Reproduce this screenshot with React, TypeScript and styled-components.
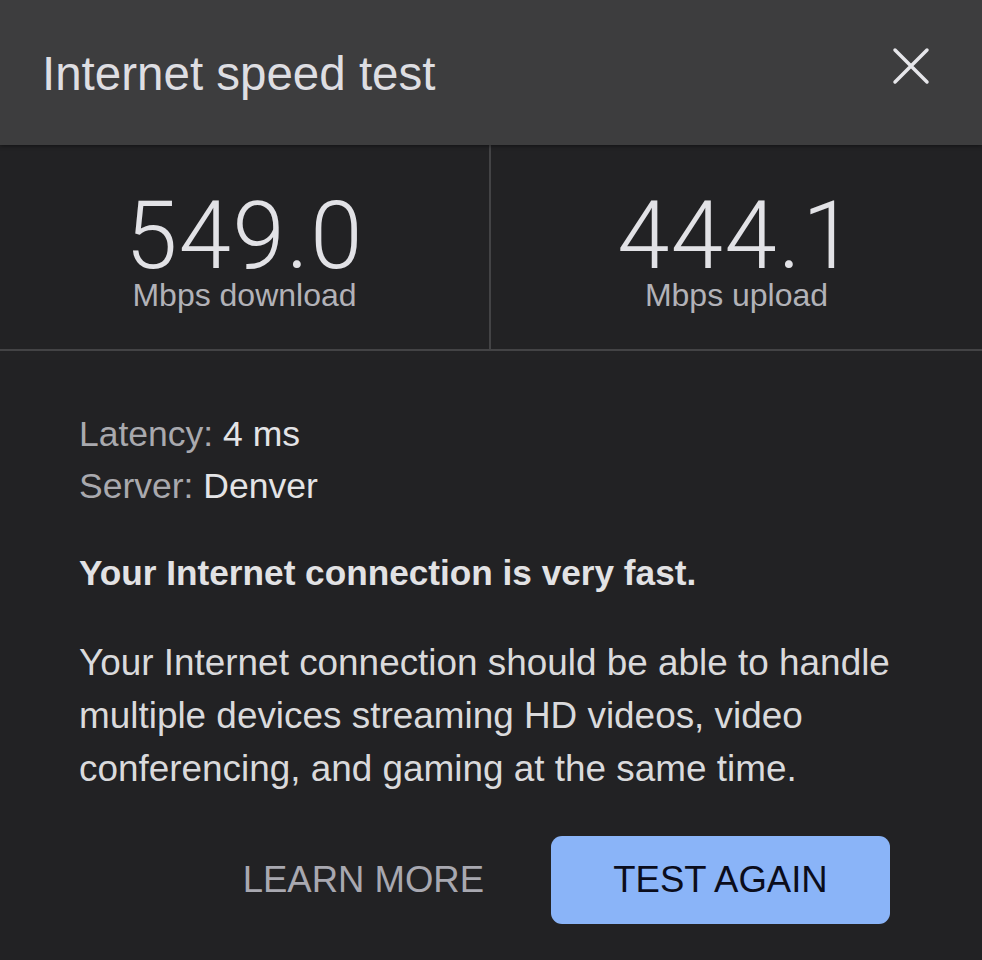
import React from "react";
import styled, { createGlobalStyle } from "styled-components";

const Global = createGlobalStyle`
  html, body { margin: 0; padding: 0; background: #222224; }
  body { font-family: "Liberation Sans", Arial, sans-serif; }
`;

const Card = styled.div`
  width: 982px;
  height: 960px;
  background: #222224;
  display: flex;
  flex-direction: column;
  overflow: hidden;
`;

const Header = styled.header`
  position: relative;
  z-index: 1;
  height: 145px;
  flex-shrink: 0;
  background: #3d3d3e;
  display: flex;
  align-items: flex-start;
  justify-content: space-between;
  padding: 46px 52px 0 42px;
  box-sizing: border-box;
  box-shadow: 0 1px 4px rgba(0, 0, 0, 0.45);
`;

const Title = styled.h1`
  margin: 0;
  font-size: 47.5px;
  line-height: 56px;
  font-weight: 400;
  color: #dedee2;
`;

const Close = styled.button`
  background: none;
  border: none;
  padding: 0;
  margin-top: 1px;
  width: 38px;
  height: 38px;
  display: flex;
  align-items: center;
  justify-content: center;
  cursor: pointer;
`;

const Stats = styled.div`
  display: grid;
  grid-template-columns: 491px 1fr;
  height: 204px;
  flex-shrink: 0;
  border-bottom: 2px solid #434345;
`;

const Stat = styled.div<{ $divider?: boolean }>`
  display: flex;
  flex-direction: column;
  align-items: center;
  padding-top: 51px;
  box-sizing: border-box;
  border-right: ${(p) => (p.$divider ? "2px solid #434345" : "none")};
`;

const Value = styled.div`
  font-family: Roboto, "Liberation Sans", sans-serif;
  font-size: 94px;
  font-weight: 300;
  line-height: 80px;
  letter-spacing: 1.5px;
  color: #e2e2e6;
`;

const Unit = styled.div`
  font-size: 32px;
  line-height: 32px;
  color: #b2b2b8;
  margin-top: 3px;
`;

const Body = styled.div`
  padding: 57px 50px 0 79px;
  display: flex;
  flex-direction: column;
`;

const InfoLine = styled.div`
  font-size: 35.5px;
  line-height: 52px;
  color: #a9a9ae;
`;

const Strong = styled.span`
  color: #e4e4e6;
`;

const Headline = styled.p`
  margin: 35px 0 0 0;
  font-size: 35.2px;
  line-height: 52px;
  font-weight: 700;
  color: #e2e2e4;
`;

const Paragraph = styled.p`
  margin: 37px 0 0 0;
  font-size: 36.9px;
  line-height: 53px;
  color: #dadadc;
`;

const Actions = styled.div`
  display: flex;
  justify-content: flex-end;
  align-items: center;
  gap: 67px;
  margin-top: 41px;
  padding-right: 42px;
`;

const TextButton = styled.button`
  background: none;
  border: none;
  font-family: inherit;
  font-size: 36.5px;
  color: #a8a8b0;
  padding: 0;
  cursor: pointer;
`;

const FilledButton = styled.button`
  width: 339px;
  height: 88px;
  background: #8ab4f8;
  border: none;
  border-radius: 11px;
  font-family: inherit;
  font-size: 36.5px;
  color: #0b0d1c;
  cursor: pointer;
`;

export default function App() {
  return (
    <>
      <Global />
      <Card>
        <Header>
          <Title>Internet speed test</Title>
          <Close aria-label="Close">
            <svg width="38" height="38" viewBox="0 0 38 38">
              <path d="M3 3 L35 35 M35 3 L3 35" stroke="#e6e6ea" strokeWidth="3.5" strokeLinecap="round" />
            </svg>
          </Close>
        </Header>
        <Stats>
          <Stat $divider>
            <Value>549.0</Value>
            <Unit>Mbps download</Unit>
          </Stat>
          <Stat>
            <Value>444.1</Value>
            <Unit>Mbps upload</Unit>
          </Stat>
        </Stats>
        <Body>
          <InfoLine>
            Latency: <Strong>4 ms</Strong>
          </InfoLine>
          <InfoLine>
            Server: <Strong>Denver</Strong>
          </InfoLine>
          <Headline>Your Internet connection is very fast.</Headline>
          <Paragraph>
            Your Internet connection should be able to handle multiple devices streaming HD videos, video
            conferencing, and gaming at the same time.
          </Paragraph>
          <Actions>
            <TextButton>LEARN MORE</TextButton>
            <FilledButton>TEST AGAIN</FilledButton>
          </Actions>
        </Body>
      </Card>
    </>
  );
}
